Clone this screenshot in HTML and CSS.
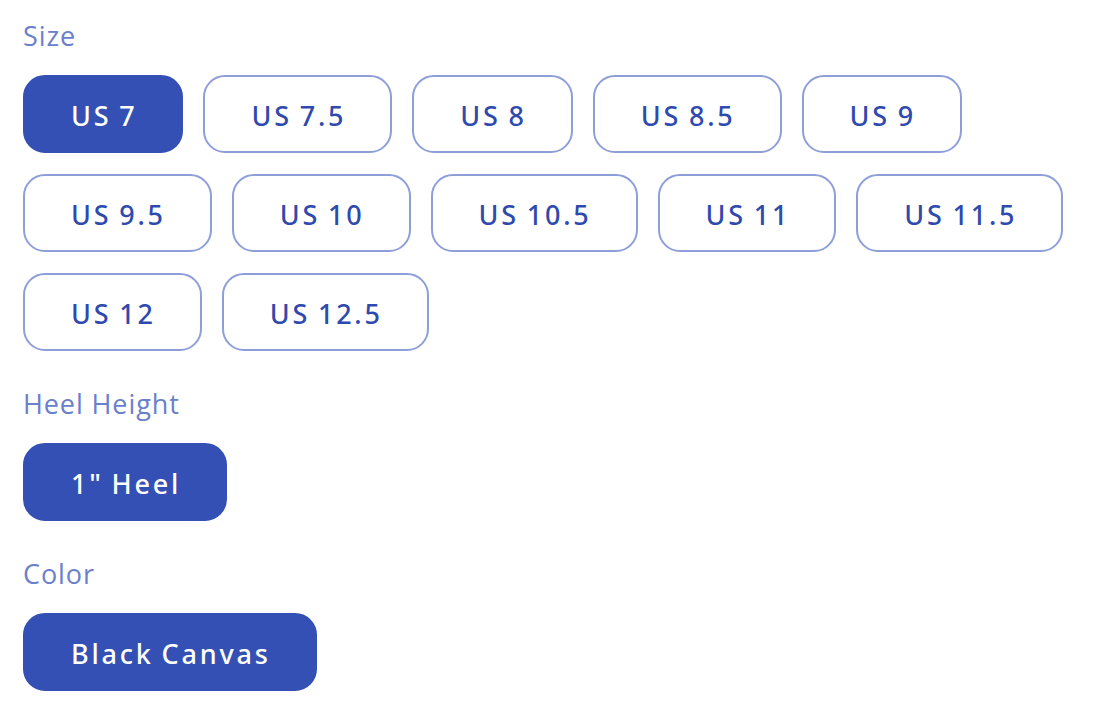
FILE: index.html
```html
<!DOCTYPE html>
<html lang="en">
<head>
<meta charset="utf-8">
<title>Options</title>
<link rel="stylesheet" href="styles.css">
</head>
<body>
<div class="options">
  <section class="group">
    <h3 class="label">Size</h3>
    <div class="chips">
      <button class="chip active">US 7</button>
      <button class="chip">US 7.5</button>
      <button class="chip">US 8</button>
      <button class="chip">US 8.5</button>
      <button class="chip">US 9</button>
      <button class="chip">US 9.5</button>
      <button class="chip">US 10</button>
      <button class="chip">US 10.5</button>
      <button class="chip">US 11</button>
      <button class="chip">US 11.5</button>
      <button class="chip">US 12</button>
      <button class="chip">US 12.5</button>
    </div>
  </section>
  <section class="group">
    <h3 class="label">Heel Height</h3>
    <div class="chips">
      <button class="chip active">1" Heel</button>
    </div>
  </section>
  <section class="group">
    <h3 class="label">Color</h3>
    <div class="chips">
      <button class="chip active">Black Canvas</button>
    </div>
  </section>
</div>
</body>
</html>
```
FILE: styles.css
```css
* { box-sizing: border-box; }
html, body { margin: 0; background: #ffffff; }
body {
  font-family: "Open Sans", "Noto Sans", sans-serif;
  width: 1096px;
  height: 722px;
  overflow: hidden;
}
.options {
  padding: 16px 23px 0 23px;
  display: flex;
  flex-direction: column;
  gap: 33px;
}
.group {
  display: flex;
  flex-direction: column;
  gap: 19px;
}
.label {
  margin: 0;
  font-size: 27px;
  font-weight: 400;
  line-height: 40px;
  color: #6b80cb;
  letter-spacing: 0.9px;
}
.chips {
  display: flex;
  flex-wrap: wrap;
  column-gap: 20px;
  row-gap: 21px;
  width: 1060px;
}
.chip {
  font-family: "Noto Sans", "Open Sans", sans-serif;
  height: 78px;
  padding: 3px 44px 0 46px;
  border: 2px solid #8e9ed9;
  border-radius: 22px;
  background: #ffffff;
  color: #2f4aae;
  font-size: 27px;
  letter-spacing: 2.8px;
  word-spacing: -2px;
  font-weight: 500;
  cursor: pointer;
}
.chip.active {
  background: #3450b4;
  border-color: #3450b4;
  color: #ffffff;
}
```
